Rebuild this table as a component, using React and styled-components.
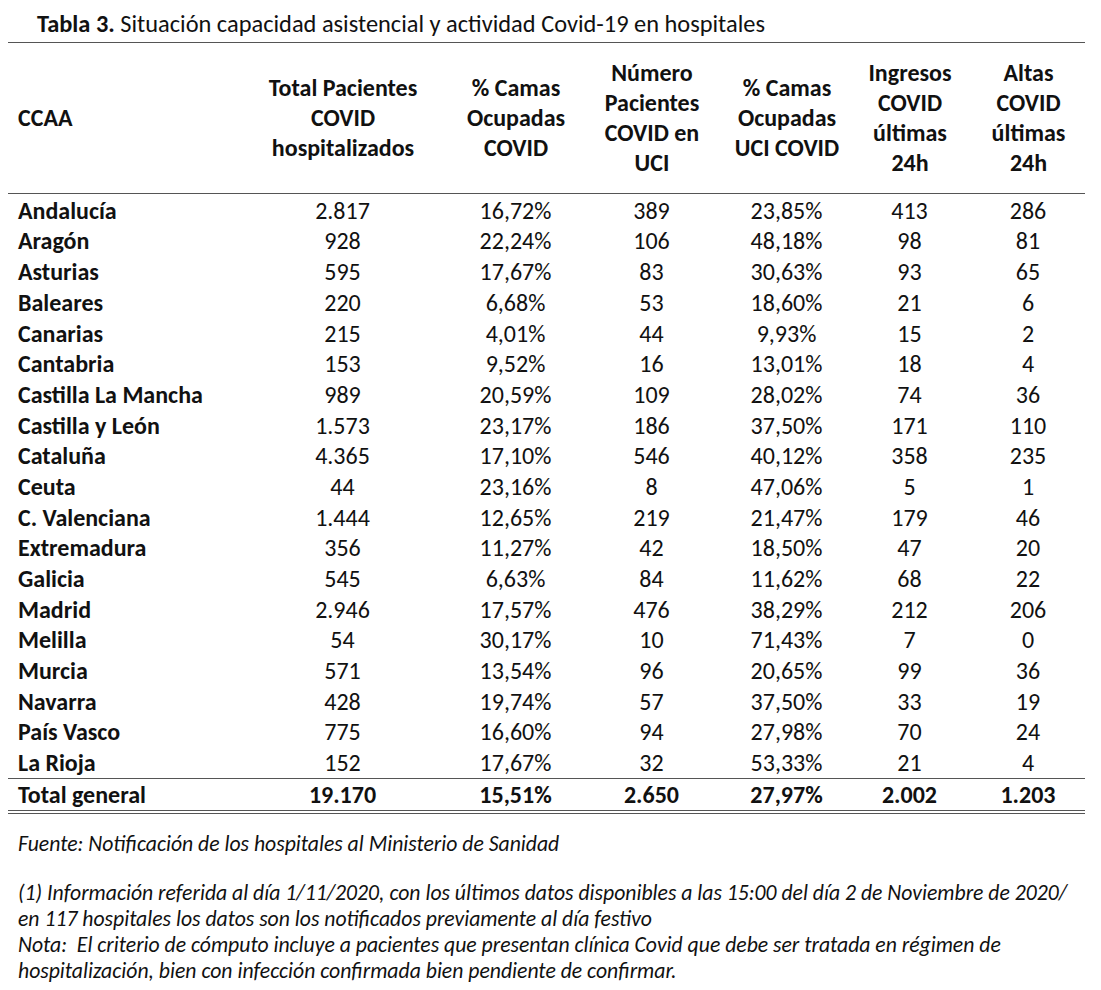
import React from "react";
import styled, { createGlobalStyle } from "styled-components";

const GlobalStyle = createGlobalStyle`
  body {
    margin: 0;
    background: #fff;
    font-family: Carlito, Calibri, Lato, "Liberation Sans", sans-serif;
    color: #111;
  }
`;

const Page = styled.div`
  width: 1101px;
  height: 990px;
  box-sizing: border-box;
  padding: 12px 16px 0 8px;
`;

const Title = styled.div`
  font-size: 24.4px;
  line-height: 24px;
  padding-left: 29px;
  padding-bottom: 6px;
  white-space: nowrap;
  border-bottom: 1.5px solid #555;
  b {
    font-weight: 700;
  }
`;

const Table = styled.table`
  width: 1077px;
  border-collapse: collapse;
  table-layout: fixed;
  font-size: 24px;
`;

const HeadCell = styled.th`
  box-sizing: border-box;
  width: ${(p) => p.$w}px;
  height: 150px;
  font-weight: 700;
  line-height: 30px;
  text-align: ${(p) => (p.$left ? "left" : "center")};
  padding: 0 0 0 ${(p) => (p.$left ? "10px" : "0")};
  vertical-align: middle;
  white-space: nowrap;
  border-bottom: 1.5px solid #555;
`;

const Row = styled.tr`
  height: ${(p) => (p.$first ? "33.6px" : "30.7px")};
  td {
    padding-top: ${(p) => (p.$first ? "2.4px" : "0")};
  }
`;

const TotalRow = styled.tr`
  height: 33px;
  td {
    font-weight: 700;
    border-top: 1.5px solid #555;
    border-bottom: 4px double #555;
  }
`;

const Cell = styled.td`
  padding-left: ${(p) => (p.$left ? "10px" : "0")};
  text-align: ${(p) => (p.$left ? "left" : "center")};
  font-weight: ${(p) => (p.$left ? 700 : 400)};
  line-height: 24px;
  vertical-align: middle;
  white-space: nowrap;
`;

const Notes = styled.div`
  font-style: italic;
  font-size: 21.7px;
  line-height: 26px;
  padding-left: 10px;
  margin-top: 17px;
  white-space: nowrap;
`;

const Note = styled.p`
  margin: 0 0 ${(p) => p.$gap || 0}px;
`;

const widths = [224, 222, 124, 148, 122, 124, 113];

const headers = [
  ["CCAA"],
  ["Total Pacientes", "COVID", "hospitalizados"],
  ["% Camas", "Ocupadas", "COVID"],
  ["Número", "Pacientes", "COVID en", "UCI"],
  ["% Camas", "Ocupadas", "UCI COVID"],
  ["Ingresos", "COVID", "últimas", "24h"],
  ["Altas", "COVID", "últimas", "24h"],
];

const rows = [
  ["Andalucía", "2.817", "16,72%", "389", "23,85%", "413", "286"],
  ["Aragón", "928", "22,24%", "106", "48,18%", "98", "81"],
  ["Asturias", "595", "17,67%", "83", "30,63%", "93", "65"],
  ["Baleares", "220", "6,68%", "53", "18,60%", "21", "6"],
  ["Canarias", "215", "4,01%", "44", "9,93%", "15", "2"],
  ["Cantabria", "153", "9,52%", "16", "13,01%", "18", "4"],
  ["Castilla La Mancha", "989", "20,59%", "109", "28,02%", "74", "36"],
  ["Castilla y León", "1.573", "23,17%", "186", "37,50%", "171", "110"],
  ["Cataluña", "4.365", "17,10%", "546", "40,12%", "358", "235"],
  ["Ceuta", "44", "23,16%", "8", "47,06%", "5", "1"],
  ["C. Valenciana", "1.444", "12,65%", "219", "21,47%", "179", "46"],
  ["Extremadura", "356", "11,27%", "42", "18,50%", "47", "20"],
  ["Galicia", "545", "6,63%", "84", "11,62%", "68", "22"],
  ["Madrid", "2.946", "17,57%", "476", "38,29%", "212", "206"],
  ["Melilla", "54", "30,17%", "10", "71,43%", "7", "0"],
  ["Murcia", "571", "13,54%", "96", "20,65%", "99", "36"],
  ["Navarra", "428", "19,74%", "57", "37,50%", "33", "19"],
  ["País Vasco", "775", "16,60%", "94", "27,98%", "70", "24"],
  ["La Rioja", "152", "17,67%", "32", "53,33%", "21", "4"],
];

const total = ["Total general", "19.170", "15,51%", "2.650", "27,97%", "2.002", "1.203"];

export default function App() {
  return (
    <Page>
      <GlobalStyle />
      <Title>
        <b>Tabla 3.</b> Situación capacidad asistencial y actividad Covid-19 en hospitales
      </Title>
      <Table>
        <thead>
          <tr>
            {headers.map((lines, i) => (
              <HeadCell key={i} $w={widths[i]} $left={i === 0}>
                {lines.map((l, j) => (
                  <React.Fragment key={j}>
                    {j > 0 && <br />}
                    {l}
                  </React.Fragment>
                ))}
              </HeadCell>
            ))}
          </tr>
        </thead>
        <tbody>
          {rows.map((r, i) => (
            <Row key={r[0]} $first={i === 0}>
              {r.map((v, j) => (
                <Cell key={j} $left={j === 0}>
                  {v}
                </Cell>
              ))}
            </Row>
          ))}
          <TotalRow>
            {total.map((v, j) => (
              <Cell key={j} $left={j === 0}>
                {v}
              </Cell>
            ))}
          </TotalRow>
        </tbody>
      </Table>
      <Notes>
        <Note $gap={23}>Fuente: Notificación de los hospitales al Ministerio de Sanidad</Note>
        <Note>
          (1) Información referida al día 1/11/2020, con los últimos datos disponibles a las 15:00 del día 2 de Noviembre de 2020/
          <br />
          en 117 hospitales los datos son los notificados previamente al día festivo
        </Note>
        <Note>
          Nota:&nbsp; El criterio de cómputo incluye a pacientes que presentan clínica Covid que debe ser tratada en régimen de
          <br />
          hospitalización, bien con infección confirmada bien pendiente de confirmar.
        </Note>
      </Notes>
    </Page>
  );
}
